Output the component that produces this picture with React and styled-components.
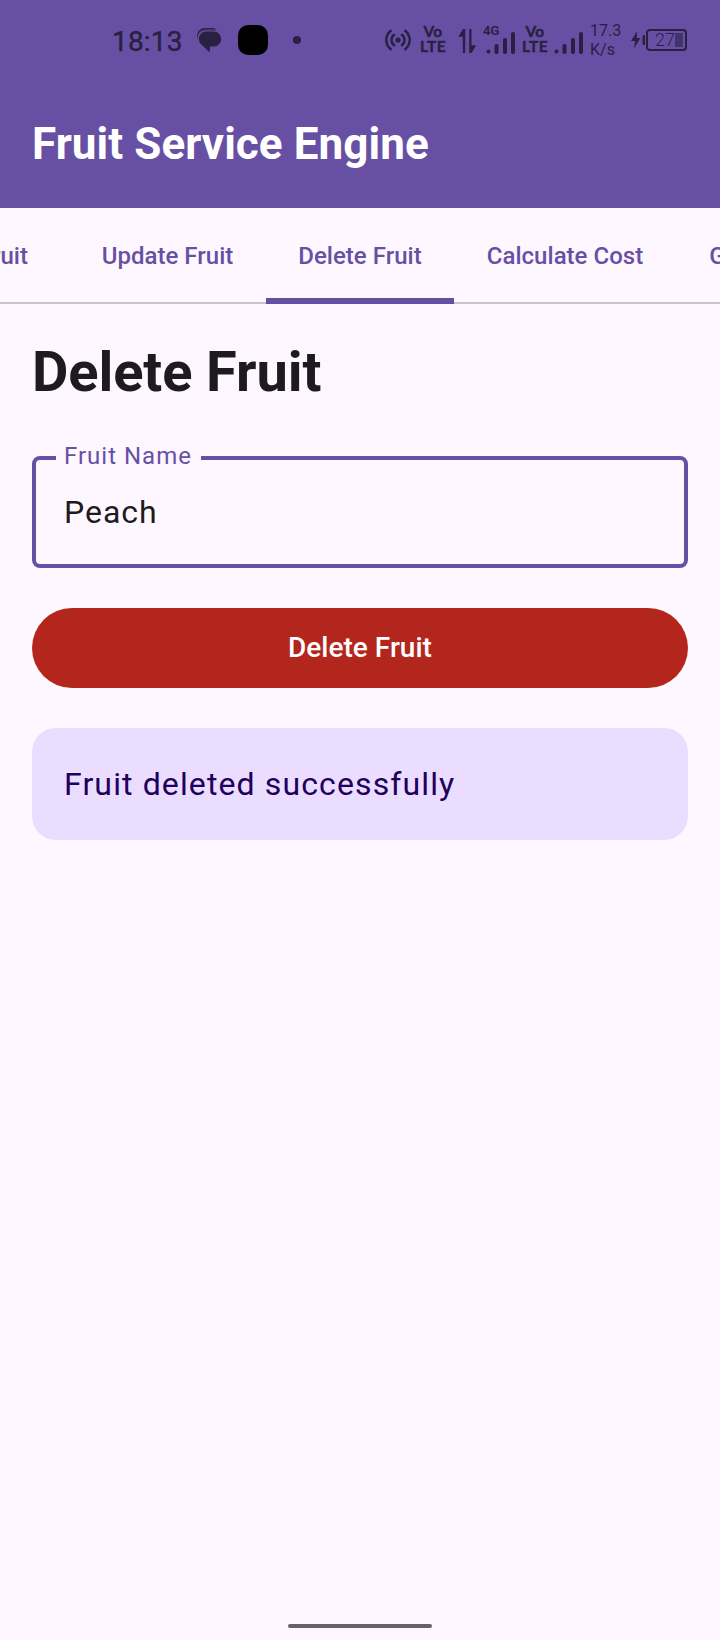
import React from "react";
import styled, { createGlobalStyle } from "styled-components";

const color = {
  primary: "#6750A4",
  surface: "#FEF7FF",
  onSurface: "#1D1B20",
  outline: "#CAC4D0",
  error: "#B3261E",
  container: "#EADDFF",
  onContainer: "#21005D",
  status: "#292042",
};

const GlobalStyle = createGlobalStyle`
  *, *::before, *::after { box-sizing: border-box; }
  body { margin: 0; background: ${color.surface}; font-family: Roboto, "Liberation Sans", sans-serif; }
`;

const Screen = styled.div`
  width: 720px;
  height: 1640px;
  display: flex;
  flex-direction: column;
  overflow: hidden;
  background: ${color.surface};
  color: ${color.onSurface};
`;

const StatusBar = styled.header`
  height: 80px;
  flex: none;
  display: flex;
  align-items: center;
  justify-content: space-between;
  padding: 0 33px 0 112px;
  background: ${color.primary};
  color: ${color.status};
`;

const StatusGroup = styled.div`
  display: flex;
  align-items: center;
  height: 80px;
`;

const Clock = styled.time`
  width: 84px;
  padding-top: 3px;
  font-size: 28px;
  line-height: 32px;
  font-weight: 400;
  letter-spacing: 0.2px;
  -webkit-text-stroke: 0.4px ${color.status};
`;

const Glyph = styled.svg`
  display: block;
  flex: none;
  margin-left: ${(p) => p.$gap || 0}px;
  overflow: visible;
`;

const AppBadge = styled.span`
  width: 30px;
  height: 30px;
  margin-left: 16px;
  border-radius: 10px;
  background: #000;
`;

const Dot = styled.span`
  width: 8px;
  height: 8px;
  margin-left: 25px;
  border-radius: 50%;
  background: ${color.status};
`;

const Carrier = styled.div`
  width: 26px;
  margin-left: ${(p) => p.$gap}px;
  padding-bottom: 3px;
  display: flex;
  flex-direction: column;
  align-items: center;
  font-family: Lato, Roboto, sans-serif;
  font-size: 15.5px;
  line-height: 15px;
  font-weight: 700;
  letter-spacing: 0.4px;
  -webkit-text-stroke: 0.4px ${color.status};
  white-space: nowrap;
`;

const SignalGroup = styled.div`
  width: ${(p) => p.$width}px;
  height: 28px;
  margin-left: 6px;
  display: flex;
  position: relative;
  align-items: flex-end;
  justify-content: flex-end;
`;

const NetworkType = styled.span`
  position: absolute;
  left: 0;
  top: -1px;
  font-size: 13px;
  line-height: 12px;
  font-weight: 500;
  -webkit-text-stroke: 0.2px ${color.status};
`;

const Speed = styled.div`
  width: 41px;
  margin-left: 6px;
  font-size: 16px;
  line-height: 19px;
`;

const Battery = styled.div`
  width: 41px;
  height: 22px;
  margin-left: 1px;
  padding: 2px;
  display: flex;
  align-items: center;
  justify-content: flex-end;
  border: 2px solid ${color.status};
  border-radius: 4px;
  font-size: 18px;
  line-height: 18px;
  font-weight: 300;
`;

const BatteryFill = styled.span`
  width: 8px;
  height: 14px;
  background: ${color.status};
  opacity: 0.6;
`;

const AppBar = styled.div`
  height: 128px;
  flex: none;
  display: flex;
  align-items: center;
  padding: 0 32px;
  background: ${color.primary};
`;

const AppTitle = styled.h1`
  margin: 0;
  color: #fff;
  font-size: 44px;
  line-height: 56px;
  font-weight: 700;
  letter-spacing: 0.07px;
`;

const Tabs = styled.nav`
  height: 96px;
  flex: none;
  display: flex;
  overflow: hidden;
  box-shadow: inset 0 -2px ${color.outline};
`;

const Tab = styled.button`
  flex: none;
  width: ${(p) => p.$width}px;
  margin: 0 0 0 ${(p) => p.$shift || 0}px;
  padding: 0;
  border: 0;
  background: none;
  box-shadow: ${(p) => (p.$active ? `inset 0 -6px ${color.primary}` : "none")};
  color: ${color.primary};
  font: 500 24px/32px Roboto, sans-serif;
  letter-spacing: 0.03px;
  white-space: nowrap;
`;

const Content = styled.main`
  flex: 1;
  display: flex;
  flex-direction: column;
  padding: 32px 32px 0;
`;

const Heading = styled.h2`
  margin: 0;
  font-size: 56px;
  line-height: 72px;
  font-weight: 700;
  letter-spacing: -0.1px;
`;

const Field = styled.fieldset`
  height: 121px;
  margin: 39px 0 0;
  padding: 0 28px;
  min-width: 0;
  border: 4px solid ${color.primary};
  border-radius: 8px;
`;

const FieldLabel = styled.legend`
  height: 22px;
  width: 145px;
  margin-left: -8px;
  padding: 0 0 0 8px;
  color: ${color.primary};
  font-size: 24px;
  line-height: 18px;
  letter-spacing: 1px;
  white-space: nowrap;
`;

const FieldInput = styled.input`
  display: block;
  width: 100%;
  height: 48px;
  margin-top: 19px;
  padding: 0;
  border: 0;
  outline: 0;
  background: none;
  color: ${color.onSurface};
  font: 400 32px/48px Roboto, sans-serif;
  letter-spacing: 1px;
`;

const DeleteButton = styled.button`
  height: 80px;
  flex: none;
  margin-top: 40px;
  border: 0;
  border-radius: 40px;
  background: ${color.error};
  color: #fff;
  font: 500 28px/40px Roboto, sans-serif;
  letter-spacing: 0.02px;
`;

const Message = styled.p`
  height: 112px;
  margin: 40px 0 0;
  padding: 32px;
  border-radius: 24px;
  background: ${color.container};
  color: ${color.onContainer};
  font-size: 32px;
  line-height: 48px;
  letter-spacing: 1.12px;
`;

const HomeIndicator = styled.div`
  width: 144px;
  height: 4px;
  flex: none;
  margin: 0 auto 12px;
  border-radius: 2px;
  background: #666367;
`;

const TABS = [
  { label: "Add Fruit", width: 180, shift: -111 },
  { label: "Update Fruit", width: 197 },
  { label: "Delete Fruit", width: 188, active: true },
  { label: "Calculate Cost", width: 222 },
  { label: "Get Fruit", width: 159 },
];

function ChatIcon() {
  return (
    <Glyph width="26" height="24" viewBox="0 0 26 24" fill={color.status}>
      <path d="M10 3.6H17.8a7.4 7.4 0 0 1 0 14.8H13.8V24.5L4.8 16Q2.8 13.8 2.8 10.8A7.2 7.2 0 0 1 10 3.6Z" />
      <path d="M1 10.5C.4 4 4 0 9.5 0H16.5Q19 .2 20.5 1.5H9.5C5 1.7 1.8 4.5 1 10.5Z" />
      <path d="M1.4 10.5C1.6 5 5 2.3 9.5 2.3H20.5" fill="none" stroke={color.status} strokeWidth="0.5" />
    </Glyph>
  );
}

function HotspotIcon() {
  return (
    <Glyph width="26" height="22" viewBox="0 0 26 22" fill="none" stroke={color.status} strokeWidth="2.4" strokeLinecap="round">
      <circle cx="13" cy="11" r="2.6" fill={color.status} stroke="none" />
      <path d="M9.1 16.2a6.5 6.5 0 0 1 0-10.4M16.9 5.8a6.5 6.5 0 0 1 0 10.4" />
      <path d="M5.8 20.2a11.7 11.7 0 0 1 0-18.4M20.2 1.8a11.7 11.7 0 0 1 0 18.4" />
    </Glyph>
  );
}

function VoLte({ gap }) {
  return (
    <Carrier $gap={gap}>
      <span>Vo</span>
      <span>LTE</span>
    </Carrier>
  );
}

function DataArrows() {
  return (
    <Glyph $gap={12} width="19" height="25" viewBox="0 0 19 25" fill={color.status}>
      <path d="M5 1h2.2v24H4.8V8.7H0.3Z" />
      <path d="M13.5 25h-2.3V1h2.3v16.3h4.8Z" />
    </Glyph>
  );
}

function SignalBars() {
  return (
    <Glyph width="30" height="23" viewBox="0 0 30 23" fill={color.status}>
      <rect x="0.5" y="18.5" width="4" height="4" rx="2" />
      <rect x="8.5" y="13" width="4" height="10" rx="1.8" />
      <rect x="17" y="7" width="4" height="16" rx="1.8" />
      <rect x="25" y="1" width="4" height="22" rx="1.8" />
    </Glyph>
  );
}

function ChargeIcon() {
  return (
    <Glyph width="14" height="18" viewBox="0 0 14 18" fill={color.status}>
      <path d="M6.2 0 0 10h4L3.2 17.5 9.3 7H5.6Z" />
      <path d="M14 4v10h-1c-1 0-1.5-1-1.5-2V6c0-1 .5-2 1.5-2Z" />
    </Glyph>
  );
}

export default function App() {
  return (
    <Screen>
      <GlobalStyle />
      <StatusBar>
        <StatusGroup>
          <Clock>18:13</Clock>
          <ChatIcon />
          <AppBadge />
          <Dot />
        </StatusGroup>
        <StatusGroup>
          <HotspotIcon />
          <VoLte gap={9} />
          <DataArrows />
          <SignalGroup $width={33}>
            <NetworkType>4G</NetworkType>
            <SignalBars />
          </SignalGroup>
          <VoLte gap={6} />
          <SignalGroup $width={30}>
            <SignalBars />
          </SignalGroup>
          <Speed>17.3<br />K/s</Speed>
          <ChargeIcon />
          <Battery>27<BatteryFill /></Battery>
        </StatusGroup>
      </StatusBar>
      <AppBar>
        <AppTitle>Fruit Service Engine</AppTitle>
      </AppBar>
      <Tabs>
        {TABS.map((t) => (
          <Tab key={t.label} $width={t.width} $shift={t.shift} $active={t.active}>{t.label}</Tab>
        ))}
      </Tabs>
      <Content>
        <Heading>Delete Fruit</Heading>
        <Field>
          <FieldLabel>Fruit Name</FieldLabel>
          <FieldInput defaultValue="Peach" aria-label="Fruit Name" />
        </Field>
        <DeleteButton>Delete Fruit</DeleteButton>
        <Message>Fruit deleted successfully</Message>
      </Content>
      <HomeIndicator />
    </Screen>
  );
}
